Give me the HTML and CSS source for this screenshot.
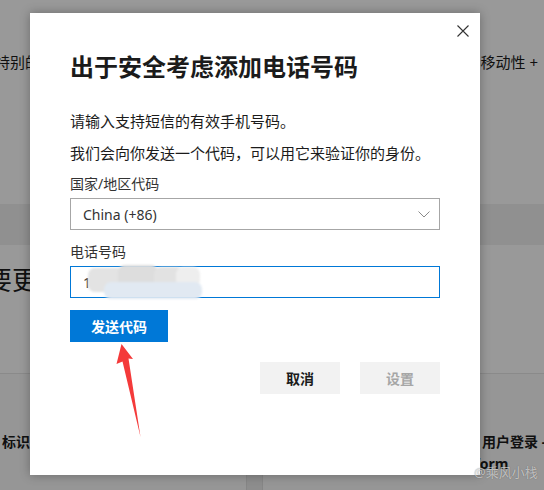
FILE: index.html
```html
<!DOCTYPE html>
<html>
    <head>
        <meta charset="utf-8">
        <meta name="viewport" content="width=device-width, initial-scale=1.0">
        <title>添加电话号码</title>

        <link rel="stylesheet" href="styles.css">
    </head>
    <body>
        <div id="page">
            <div class="features">
                <div class="feature feature--left">特别的功能</div>
                <div class="feature feature--right">移动性 +</div>
            </div>
            <div class="band"></div>
            <div class="intro">
                <h2>需要更多帮助</h2>
            </div>
            <div class="cards">
                <div class="card card--left">
                    <h3>标识</h3>
                </div>
                <div class="card card--right">
                    <h3>用户登录 -<br>Platform</h3>
                </div>
            </div>
        </div>

        <div class="overlay"></div>

        <div id="dialog">
            <button type="button" class="close" aria-label="关闭">
                <svg width="12" height="12" viewBox="0 0 12 12">
                    <path d="M0.5 0.5 L11.5 11.5 M11.5 0.5 L0.5 11.5" stroke="#333" stroke-width="1.1" fill="none"/>
                </svg>
            </button>
            <h1>出于安全考虑添加电话号码</h1>
            <p>请输入支持短信的有效手机号码。</p>
            <p class="last">我们会向你发送一个代码，可以用它来验证你的身份。</p>

            <div class="field">
                <label>国家/地区代码</label>
                <div class="select">
                    <span>China (+86)</span>
                    <svg width="12" height="7" viewBox="0 0 12 7">
                        <path d="M0.5 0.5 L6 6 L11.5 0.5" stroke="#8a8a8a" stroke-width="1" fill="none"/>
                    </svg>
                </div>
            </div>

            <div class="field field--phone">
                <label>电话号码</label>
                <div class="phone">
                    <span>1</span>
                    <span class="blur">
                        <i class="b1"></i><i class="b2"></i><i class="b3"></i><i class="b4"></i><i class="b5"></i>
                    </span>
                </div>
            </div>

            <button type="button" class="primary">发送代码</button>

            <div class="actions">
                <button type="button" class="secondary">取消</button>
                <button type="button" class="secondary disabled">设置</button>
            </div>
        </div>

        <svg class="arrow" width="544" height="490" viewBox="0 0 544 490">
            <polygon points="121.5,344 133,359 128.5,358.5 140.5,437 122.5,361.5 116.5,364" fill="#f43a3a"/>
        </svg>

        <div class="watermark">@乘风小栈</div>
    </body>
</html>
```

FILE: styles.css
```css
:root {
    --ink: #1b1b1b;
    --blue: #0078d7;
    --gray-btn: #f2f2f2;
    --font: "Noto Sans", "Noto Sans CJK SC", sans-serif;
}

body {
    margin: 0;
    width: 544px;
    height: 490px;
    overflow: hidden;
    background-color: #fff;
    color: var(--ink);
    font-family: var(--font);
    position: relative;
}

/* page behind the dialog */

#page {
    height: 490px;
    display: flex;
    flex-direction: column;
}

.features {
    height: 204px;
    box-sizing: border-box;
    padding: 52px 6px 0 0;
    display: flex;
    justify-content: space-between;
}

.feature {
    font-size: 15px;
    line-height: 20px;
    white-space: nowrap;
}

.feature--left {
    margin-left: -5px;
}

.band {
    height: 41px;
    background-color: #f0f0f0;
}

.intro {
    height: 129px;
    box-sizing: border-box;
    padding-top: 19px;
    border-bottom: 1px solid #e6e6e6;
}

.intro h2 {
    margin: 0 0 0 -40px;
    font-size: 26px;
    line-height: 32px;
    font-weight: 400;
    white-space: nowrap;
}

.cards {
    flex: 1;
    display: grid;
    grid-template-columns: 247px 1fr;
    column-gap: 15px;
    background-color: #ebebeb;
}

.card {
    background-color: #fafafa;
    padding-top: 57px;
}

.card--left {
    border-right: 1px solid #e0e0e0;
    padding-left: 2px;
}

.card--right {
    border-left: 1px solid #e0e0e0;
    padding-left: 184px;
}

.card h3 {
    margin: 0;
    font-size: 14px;
    line-height: 22px;
    font-weight: 700;
    white-space: nowrap;
}

.card--right h3 {
    text-indent: 35px;
}

.overlay {
    position: absolute;
    inset: 0;
    background-color: rgba(0, 0, 0, 0.4);
}

/* dialog */

#dialog {
    position: absolute;
    left: 30px;
    top: 13px;
    width: 450px;
    height: 462px;
    box-sizing: border-box;
    padding: 38px 40px 0;
    background-color: #fff;
    box-shadow: 0 0 10px rgba(0, 0, 0, 0.3);
}

.close {
    position: absolute;
    top: 12px;
    right: 11px;
    width: 12px;
    height: 12px;
    padding: 0;
    border: none;
    background: none;
    display: block;
}

.close svg {
    display: block;
}

h1 {
    margin: 0 0 28px;
    font-size: 24px;
    line-height: 32px;
    font-weight: 700;
    white-space: nowrap;
}

p {
    margin: 0 0 12px;
    font-size: 15px;
    line-height: 20px;
}

p.last {
    margin-bottom: 11px;
}

label {
    display: block;
    margin-bottom: 4px;
    font-size: 14px;
    line-height: 20px;
    color: #333;
}

.field--phone {
    margin-top: 12px;
}

.select {
    height: 32px;
    box-sizing: border-box;
    border: 1px solid #a6a6a6;
    padding: 0 9px 0 12px;
    display: flex;
    align-items: center;
    justify-content: space-between;
    font-size: 14px;
    color: #333;
}

.select svg {
    display: block;
}

.phone {
    position: relative;
    height: 32px;
    box-sizing: border-box;
    border: 1px solid var(--blue);
    padding-left: 12px;
    display: flex;
    align-items: center;
    font-size: 14px;
    color: #333;
}

/* mosaic over the phone number */
.blur {
    position: absolute;
    left: 17px;
    top: -3px;
    width: 116px;
    height: 37px;
    filter: blur(1px);
}

.blur i {
    position: absolute;
    border-radius: 7px;
}

.b1 { left: 0; top: 4px; width: 40px; height: 24px; background-color: #e3e3e3; }
.b2 { left: 30px; top: 1px; width: 40px; height: 32px; background-color: #dddddd; }
.b3 { left: 66px; top: 3px; width: 30px; height: 28px; background-color: #e2e2e2; }
.b4 { left: 88px; top: 3px; width: 24px; height: 20px; background-color: #eeeeee; }
.b5 { left: 16px; top: 18px; width: 98px; height: 17px; background-color: #e1e9f2; border-radius: 4px; }

button {
    font-family: var(--font);
    cursor: pointer;
}

.primary {
    margin-top: 12px;
    width: 98px;
    height: 32px;
    border: none;
    padding: 0;
    background-color: var(--blue);
    color: #fff;
    font-size: 14px;
    font-weight: 700;
    display: block;
}

.actions {
    margin-top: 20px;
    display: flex;
    justify-content: flex-end;
    gap: 20px;
}

.secondary {
    width: 80px;
    height: 32px;
    border: none;
    padding: 0;
    background-color: var(--gray-btn);
    color: var(--ink);
    font-size: 14px;
    font-weight: 700;
}

.secondary.disabled {
    color: #a6a6a6;
}

.arrow {
    position: absolute;
    left: 0;
    top: 0;
    pointer-events: none;
}

.watermark {
    position: absolute;
    left: 474px;
    top: 463px;
    font-size: 13px;
    line-height: 18px;
    color: rgba(255, 255, 255, 0.6);
    text-shadow: 0 0 1px rgba(0, 0, 0, 0.45);
    white-space: nowrap;
}
```
